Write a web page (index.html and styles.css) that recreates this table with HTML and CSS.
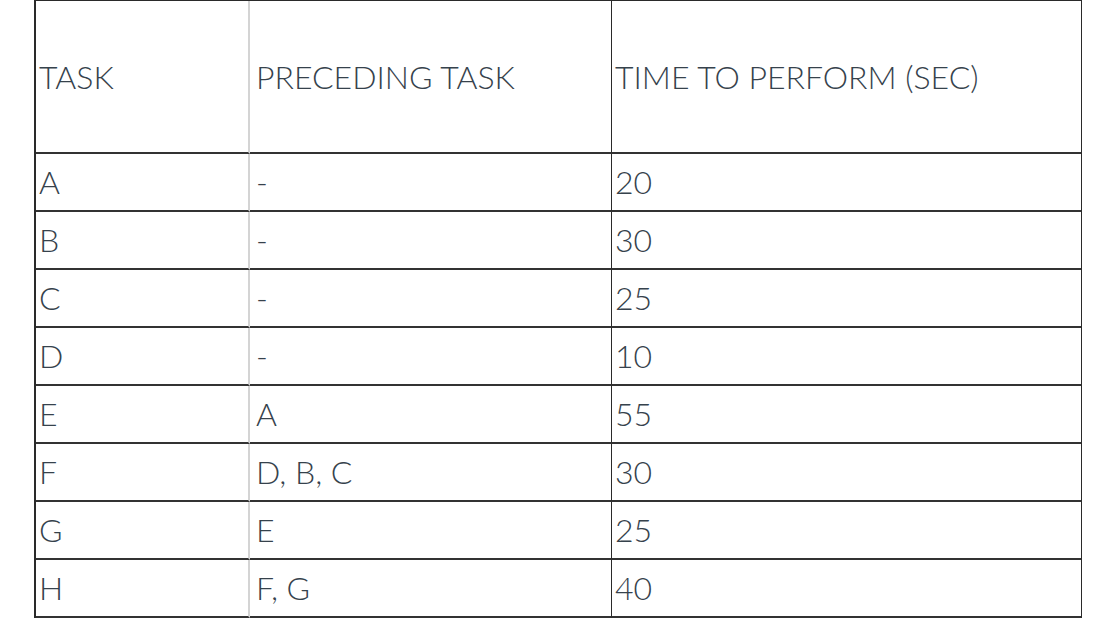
FILE: index.html
```html
<!DOCTYPE html>
<html>
<head>
<meta charset="utf-8">
<link rel="stylesheet" href="styles.css">
</head>
<body>
<table class="tasks">
  <thead>
    <tr class="head-row">
      <td class="c1">TASK</td>
      <td class="c2">PRECEDING TASK</td>
      <td class="c3">TIME TO PERFORM (SEC)</td>
    </tr>
  </thead>
  <tbody>
    <tr><td class="c1">A</td><td class="c2">-</td><td class="c3">20</td></tr>
    <tr><td class="c1">B</td><td class="c2">-</td><td class="c3">30</td></tr>
    <tr><td class="c1">C</td><td class="c2">-</td><td class="c3">25</td></tr>
    <tr><td class="c1">D</td><td class="c2">-</td><td class="c3">10</td></tr>
    <tr><td class="c1">E</td><td class="c2">A</td><td class="c3">55</td></tr>
    <tr><td class="c1">F</td><td class="c2">D, B, C</td><td class="c3">30</td></tr>
    <tr><td class="c1">G</td><td class="c2">E</td><td class="c3">25</td></tr>
    <tr><td class="c1">H</td><td class="c2">F, G</td><td class="c3">40</td></tr>
  </tbody>
</table>
</body>
</html>
```
FILE: styles.css
```css
html, body {
  margin: 0;
  padding: 0;
  background: #ffffff;
}
body {
  padding-left: 34px;
  font-family: "Lato", "Liberation Sans", sans-serif;
  font-weight: 300;
  color: #36424c;
}
.tasks {
  border-collapse: separate;
  border-spacing: 0;
  width: 1048px;
  border-top: 1px solid #2a2a2a;
  border-left: 2px solid #2a2a2a;
  border-right: 1px solid #2a2a2a;
  font-size: 32px;
}
.tasks td {
  padding: 0 0 0 4px;
  vertical-align: middle;
  border-bottom: 2px solid #333;
  height: 56px;
  line-height: 1;
  white-space: nowrap;
}
.tasks .head-row td {
  height: 151px;
}
.tasks .c1 {
  width: 209px;
  padding-left: 3px;
  border-right: 2px solid #d4d4d4;
}
.tasks .c2 {
  width: 355px;
  padding-left: 6px;
  border-right: 1px solid #2a2a2a;
}
.tasks .c3 {
  padding-left: 3px;
}
```
